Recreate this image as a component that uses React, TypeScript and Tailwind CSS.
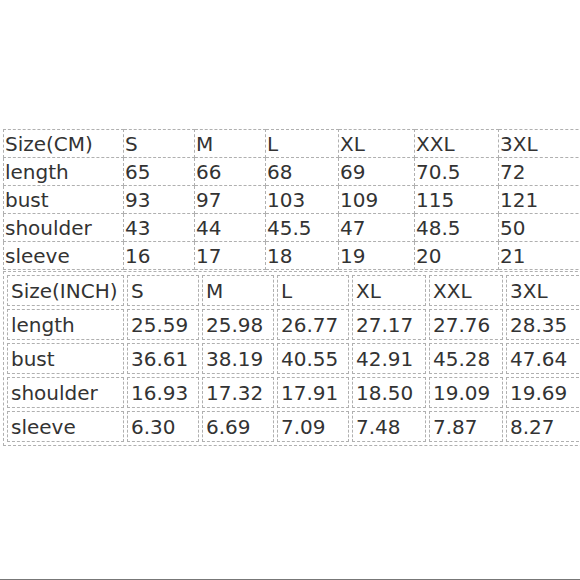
import React from 'react';

const cmRows = [
  ['Size(CM)', 'S', 'M', 'L', 'XL', 'XXL', '3XL'],
  ['length', '65', '66', '68', '69', '70.5', '72'],
  ['bust', '93', '97', '103', '109', '115', '121'],
  ['shoulder', '43', '44', '45.5', '47', '48.5', '50'],
  ['sleeve', '16', '17', '18', '19', '20', '21'],
];

const inchRows = [
  ['Size(INCH)', 'S', 'M', 'L', 'XL', 'XXL', '3XL'],
  ['length', '25.59', '25.98', '26.77', '27.17', '27.76', '28.35'],
  ['bust', '36.61', '38.19', '40.55', '42.91', '45.28', '47.64'],
  ['shoulder', '16.93', '17.32', '17.91', '18.50', '19.09', '19.69'],
  ['sleeve', '6.30', '6.69', '7.09', '7.48', '7.87', '8.27'],
];

const App: React.FC = () => {
  return (
    <div className="w-[580px] h-[580px] overflow-hidden bg-white border-b border-[#777] pt-[129px] pl-[3px] font-['DejaVu_Sans',sans-serif] text-[20px] text-[#333]">
      {/* size chart in centimetres */}
      <table className="border-collapse table-fixed w-[600px] min-w-[600px]">
        <colgroup>
          <col className="w-[120px]" />
          <col className="w-[71px]" />
          <col className="w-[71px]" />
          <col className="w-[73px]" />
          <col className="w-[76px]" />
          <col className="w-[84px]" />
          <col className="w-[105px]" />
        </colgroup>
        <tbody>
          {cmRows.map((row) => (
            <tr key={row[0]}>
              {row.map((cell, i) => (
                <td
                  key={i}
                  className="h-[28px] p-0 pl-[1px] border border-dashed border-[#b0b0b0] leading-none whitespace-nowrap"
                >
                  {cell}
                </td>
              ))}
            </tr>
          ))}
        </tbody>
      </table>

      {/* size chart in inches */}
      <table className="mt-[1px] border-separate border-spacing-[3px] table-fixed w-[610px] min-w-[610px] border border-dashed border-[#b0b0b0]">
        <colgroup>
          <col className="w-[117px]" />
          <col className="w-[72px]" />
          <col className="w-[72px]" />
          <col className="w-[72px]" />
          <col className="w-[74px]" />
          <col className="w-[74px]" />
          <col className="w-[103px]" />
        </colgroup>
        <tbody>
          {inchRows.map((row) => (
            <tr key={row[0]}>
              {row.map((cell, i) => (
                <td
                  key={i}
                  className="h-[31px] p-0 pl-[3px] border border-dashed border-[#b0b0b0] leading-none whitespace-nowrap"
                >
                  {cell}
                </td>
              ))}
            </tr>
          ))}
        </tbody>
      </table>
    </div>
  );
};

export default App;
